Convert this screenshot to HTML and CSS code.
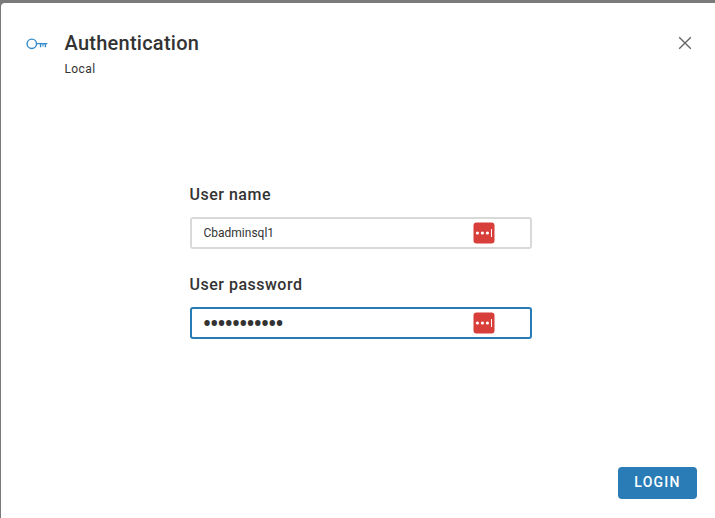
FILE: index.html
```html
<!DOCTYPE html>
<html lang="en">
<head>
<meta charset="utf-8">
<title>Authentication</title>
<link rel="stylesheet" href="styles.css">
</head>
<body>
<form class="dialog">
  <header class="header">
    <svg class="key" width="22" height="12" viewBox="0 0 22 12" fill="none" stroke="#338ac8" stroke-width="1.4">
      <circle cx="5.8" cy="5.8" r="4.7"/>
      <path d="M10.5 5.6H21.3M14.6 5.6v3.6M19.4 5.6v3.6"/>
      <path d="M17 5.6v3" stroke-width="1.1"/>
    </svg>
    <div class="heading">
      <h1 class="title">Authentication</h1>
      <div class="subtitle">Local</div>
    </div>
    <svg class="close" width="14" height="14" viewBox="0 0 14 14" fill="none" stroke="#666" stroke-width="1.4">
      <path d="M1.2 1.2l11.6 11.6M12.8 1.2L1.2 12.8"/>
    </svg>
  </header>
  <main class="fields">
    <label class="label" for="user">User name</label>
    <div class="field">
      <input class="input" id="user" type="text" value="Cbadminsql1">
      <svg class="manager" width="22" height="22" viewBox="0 0 22 22">
        <rect x=".5" y=".5" width="21" height="21" rx="3" fill="#d83f3b"/>
        <g fill="#fff"><circle cx="4.4" cy="11" r="1.6"/><circle cx="9.4" cy="11" r="1.6"/><circle cx="14.4" cy="11" r="1.6"/><rect x="18" y="7" width="1" height="8"/></g>
      </svg>
    </div>
    <label class="label" for="password">User password</label>
    <div class="field field-active">
      <input class="input input-password" id="password" type="password" value="00000000000">
      <svg class="manager" width="22" height="22" viewBox="0 0 22 22">
        <rect x=".5" y=".5" width="21" height="21" rx="3" fill="#d83f3b"/>
        <g fill="#fff"><circle cx="4.4" cy="11" r="1.6"/><circle cx="9.4" cy="11" r="1.6"/><circle cx="14.4" cy="11" r="1.6"/><rect x="18" y="7" width="1" height="8"/></g>
      </svg>
    </div>
  </main>
  <footer class="footer">
    <button class="login" type="button">LOGIN</button>
  </footer>
</form>
</body>
</html>
```

FILE: styles.css
```css
* { box-sizing: border-box; }
body {
  margin: 0;
  height: 518px;
  padding: 3px 0 0 1px;
  overflow: hidden;
  background: #7b7a7a;
  color: #333;
  font-family: Roboto, sans-serif;
}
.dialog {
  display: flex;
  flex-direction: column;
  height: 515px;
  background: #fff;
  border-radius: 4px 0 0 0;
}
.header {
  display: flex;
  align-items: flex-start;
  height: 181px;
  padding: 28px 23px 0 25px;
}
.key { margin: 7px 16.5px 0 0; }
.heading { flex: 1; }
.title {
  margin: 0;
  font-size: 20px;
  font-weight: 500;
  line-height: 24px;
  letter-spacing: 0.25px;
}
.subtitle {
  margin-top: 6px;
  font-size: 12px;
  line-height: 16px;
  letter-spacing: 0.4px;
}
.close { margin-top: 5px; }
.fields {
  flex: 1;
  width: 342px;
  margin-left: 189px;
}
.label {
  display: block;
  height: 33px;
  margin-left: -0.5px;
  font-size: 16px;
  font-weight: 500;
  line-height: 22px;
  letter-spacing: 0.5px;
}
.field {
  display: flex;
  align-items: center;
  height: 32px;
  margin-bottom: 25px;
  padding: 0 35px 0 11.5px;
  border: 2px solid #d9d9d9;
  border-radius: 3px;
}
.field-active { padding-left: 10.5px; border-color: #277cb5; }
.input {
  flex: 1;
  min-width: 0;
  height: 28px;
  padding: 0;
  border: 0;
  outline: 0;
  background: none;
  color: #333;
  font: 12px Roboto, sans-serif;
  letter-spacing: 0;
}
.input-password {
  height: 28px;
  padding-top: 2px;
  font-size: 27px;
  line-height: 26px;
  letter-spacing: -1.85px;
}
.manager { flex: none; }
.footer {
  display: flex;
  justify-content: flex-end;
  padding: 0 18px 19px;
}
.login {
  width: 79px;
  height: 32px;
  padding: 0 0 2px;
  border: 0;
  border-radius: 4px;
  background: #297cb6;
  color: #fff;
  font: 500 14px Roboto, sans-serif;
  letter-spacing: 1.25px;
}
```
